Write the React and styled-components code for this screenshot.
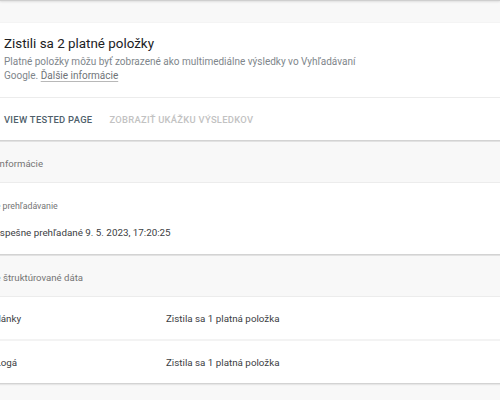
import styled, { createGlobalStyle } from 'styled-components'

const GlobalStyle = createGlobalStyle`
  html, body {
    margin: 0;
    padding: 0;
    background-color: #f8f8f8;
    font-family: Roboto, "Liberation Sans", Arial, sans-serif;
    overflow: hidden;
  }
`

const Page = styled.div`
  width: 500px;
  height: 400px;
  overflow: hidden;
`

const TopEdge = styled.div`
  height: 1px;
  background-color: #cfcfcf;
  box-shadow: 0 1px 2px rgba(0, 0, 0, 0.15);
  margin-bottom: 22px;
`

const Column = styled.div`
  margin-left: -40px;
  width: 600px;
  display: flex;
  flex-direction: column;
  gap: 2px;
`

const Card = styled.div`
  background-color: #fff;
  box-shadow: 0 1px 2px rgba(0, 0, 0, 0.22);
`

const Summary = styled.div`
  padding: 10px 0 14px 44px;
  border-bottom: 1px solid #ececec;
`

const Title = styled.div`
  font-size: 13.4px;
  line-height: 22px;
  color: #202124;
`

const Description = styled.div`
  width: 365px;
  font-size: 10px;
  line-height: 14px;
  color: #80868b;
`

const Link = styled.span`
  color: #6f7377;
  text-decoration: underline;
  text-decoration-color: #b8b8b8;
  text-underline-offset: 2px;
`

const Actions = styled.div`
  height: 42px;
  display: flex;
  align-items: center;
  gap: 17px;
  padding-left: 44px;
`

const Action = styled.span`
  font-size: 9.4px;
  font-weight: 500;
  letter-spacing: 0.3px;
  color: ${(p) => (p.$disabled ? '#c2c2c2' : '#4f5f6b')};
`

const PanelHeader = styled.div`
  box-sizing: border-box;
  height: 41px;
  padding-top: 2px;
  display: flex;
  align-items: center;
  background-color: #f8f8f8;
  border-bottom: 1px solid #ececec;
  font-size: 9.6px;
  color: #757575;
`

const Shifted = styled.span`
  margin-left: ${(p) => p.$at + 40}px;
  white-space: nowrap;
`

const Body = styled.div`
  background-color: #fff;
  padding: 16px 0 12px;
  display: flex;
  flex-direction: column;
  gap: 11px;
`

const Label = styled.div`
  font-size: 8.8px;
  line-height: 14px;
  color: #757575;
`

const Value = styled.div`
  font-size: 9.8px;
  line-height: 18px;
  color: #3c4043;
`

const Row = styled.div`
  height: 42px;
  display: flex;
  align-items: center;
  background-color: #fff;
  font-size: 9.8px;
  color: #3c4043;
  border-top: ${(p) => (p.$first ? 'none' : '2px solid #f3f3f3')};
`

const RowName = styled.div`
  width: 206px;
  flex-shrink: 0;
  overflow: hidden;
`

const items = [
  { name: 'Články', at: -8, status: 'Zistila sa 1 platná položka' },
  { name: 'Logá', at: -4.5, status: 'Zistila sa 1 platná položka' },
]

function App() {
  return (
    <Page>
      <GlobalStyle />
      <TopEdge />
      <Column>
        <Card>
          <Summary>
            <Title>Zistili sa 2 platné položky</Title>
            <Description>
              Platné položky môžu byť zobrazené ako multimediálne výsledky vo Vyhľadávaní Google.{' '}
              <Link>Ďalšie informácie</Link>
            </Description>
          </Summary>
          <Actions>
            <Action>VIEW TESTED PAGE</Action>
            <Action $disabled>ZOBRAZIŤ UKÁŽKU VÝSLEDKOV</Action>
          </Actions>
        </Card>

        <Card>
          <PanelHeader>
            <Shifted $at={-3}>Informácie</Shifted>
          </PanelHeader>
          <Body>
            <Label>
              <Shifted $at={-36}>Posledné prehľadávanie</Shifted>
            </Label>
            <Value>
              <Shifted $at={-6.5}>Úspešne prehľadané 9. 5. 2023, 17:20:25</Shifted>
            </Value>
          </Body>
        </Card>

        <Card>
          <PanelHeader>
            <Shifted $at={-31}>Zistené štruktúrované dáta</Shifted>
          </PanelHeader>
          {items.map((item, i) => (
            <Row key={item.name} $first={i === 0}>
              <RowName>
                <Shifted $at={item.at}>{item.name}</Shifted>
              </RowName>
              <span>{item.status}</span>
            </Row>
          ))}
        </Card>
      </Column>
    </Page>
  )
}

export default App
